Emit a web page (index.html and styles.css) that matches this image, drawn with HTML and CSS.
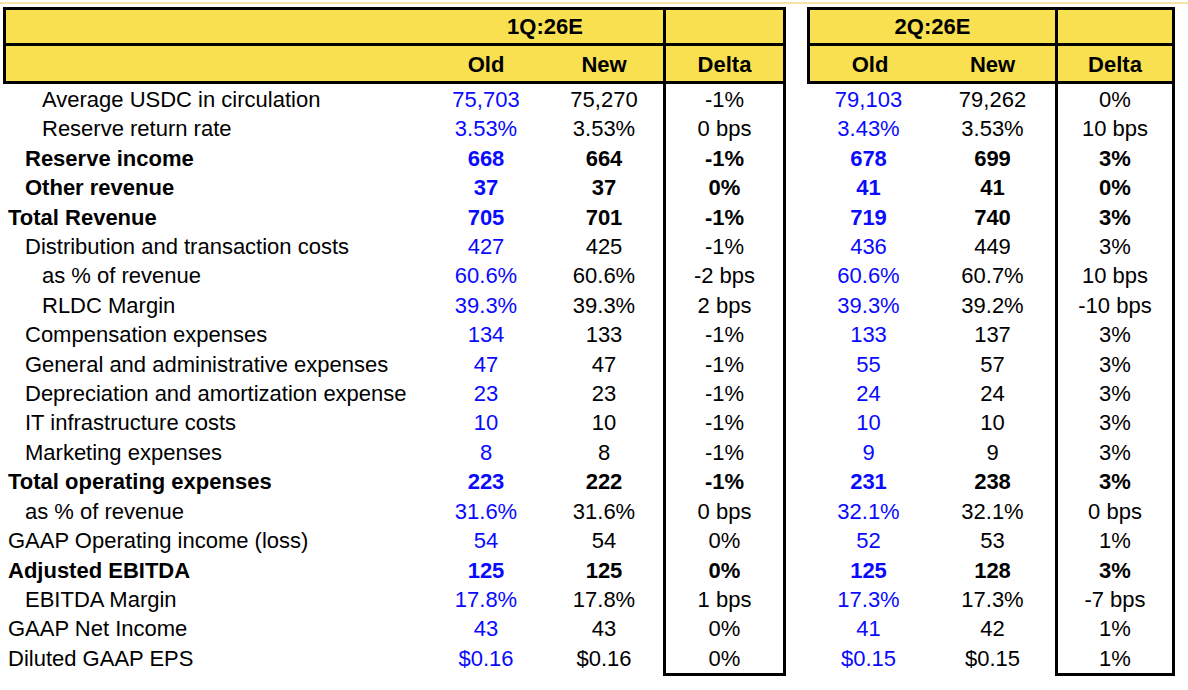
FILE: index.html
```html
<!DOCTYPE html>
<html>
<head>
<meta charset="utf-8">
<link rel="stylesheet" href="styles.css">
</head>
<body>
<div class="topline"></div>
<div class="sheet">
  <div class="row head1">
    <div class="h lab"></div>
    <div class="h span2">1Q:26E</div>
    <div class="h delta"></div>
    <div class="gap"></div>
    <div class="h span2 first">2Q:26E</div>
    <div class="h delta"></div>
  </div>
  <div class="row head2">
    <div class="h lab"></div>
    <div class="h">Old</div>
    <div class="h">New</div>
    <div class="h delta">Delta</div>
    <div class="gap"></div>
    <div class="h first">Old</div>
    <div class="h">New</div>
    <div class="h delta">Delta</div>
  </div>

  <div class="row data"><div class="lab i2">Average USDC in circulation</div><div class="old">75,703</div><div>75,270</div><div class="delta">-1%</div><div class="gap"></div><div class="old">79,103</div><div>79,262</div><div class="delta">0%</div></div>
  <div class="row data"><div class="lab i2">Reserve return rate</div><div class="old">3.53%</div><div>3.53%</div><div class="delta">0 bps</div><div class="gap"></div><div class="old">3.43%</div><div>3.53%</div><div class="delta">10 bps</div></div>
  <div class="row data bold"><div class="lab i1">Reserve income</div><div class="old">668</div><div>664</div><div class="delta">-1%</div><div class="gap"></div><div class="old">678</div><div>699</div><div class="delta">3%</div></div>
  <div class="row data bold"><div class="lab i1">Other revenue</div><div class="old">37</div><div>37</div><div class="delta">0%</div><div class="gap"></div><div class="old">41</div><div>41</div><div class="delta">0%</div></div>
  <div class="row data bold"><div class="lab">Total Revenue</div><div class="old">705</div><div>701</div><div class="delta">-1%</div><div class="gap"></div><div class="old">719</div><div>740</div><div class="delta">3%</div></div>
  <div class="row data"><div class="lab i1">Distribution and transaction costs</div><div class="old">427</div><div>425</div><div class="delta">-1%</div><div class="gap"></div><div class="old">436</div><div>449</div><div class="delta">3%</div></div>
  <div class="row data"><div class="lab i2">as % of revenue</div><div class="old">60.6%</div><div>60.6%</div><div class="delta">-2 bps</div><div class="gap"></div><div class="old">60.6%</div><div>60.7%</div><div class="delta">10 bps</div></div>
  <div class="row data"><div class="lab i2">RLDC Margin</div><div class="old">39.3%</div><div>39.3%</div><div class="delta">2 bps</div><div class="gap"></div><div class="old">39.3%</div><div>39.2%</div><div class="delta">-10 bps</div></div>
  <div class="row data"><div class="lab i1">Compensation expenses</div><div class="old">134</div><div>133</div><div class="delta">-1%</div><div class="gap"></div><div class="old">133</div><div>137</div><div class="delta">3%</div></div>
  <div class="row data"><div class="lab i1">General and administrative expenses</div><div class="old">47</div><div>47</div><div class="delta">-1%</div><div class="gap"></div><div class="old">55</div><div>57</div><div class="delta">3%</div></div>
  <div class="row data"><div class="lab i1">Depreciation and amortization expense</div><div class="old">23</div><div>23</div><div class="delta">-1%</div><div class="gap"></div><div class="old">24</div><div>24</div><div class="delta">3%</div></div>
  <div class="row data"><div class="lab i1">IT infrastructure costs</div><div class="old">10</div><div>10</div><div class="delta">-1%</div><div class="gap"></div><div class="old">10</div><div>10</div><div class="delta">3%</div></div>
  <div class="row data"><div class="lab i1">Marketing expenses</div><div class="old">8</div><div>8</div><div class="delta">-1%</div><div class="gap"></div><div class="old">9</div><div>9</div><div class="delta">3%</div></div>
  <div class="row data bold"><div class="lab">Total operating expenses</div><div class="old">223</div><div>222</div><div class="delta">-1%</div><div class="gap"></div><div class="old">231</div><div>238</div><div class="delta">3%</div></div>
  <div class="row data"><div class="lab i1">as % of revenue</div><div class="old">31.6%</div><div>31.6%</div><div class="delta">0 bps</div><div class="gap"></div><div class="old">32.1%</div><div>32.1%</div><div class="delta">0 bps</div></div>
  <div class="row data"><div class="lab">GAAP Operating income (loss)</div><div class="old">54</div><div>54</div><div class="delta">0%</div><div class="gap"></div><div class="old">52</div><div>53</div><div class="delta">1%</div></div>
  <div class="row data bold"><div class="lab">Adjusted EBITDA</div><div class="old">125</div><div>125</div><div class="delta">0%</div><div class="gap"></div><div class="old">125</div><div>128</div><div class="delta">3%</div></div>
  <div class="row data"><div class="lab i1">EBITDA Margin</div><div class="old">17.8%</div><div>17.8%</div><div class="delta">1 bps</div><div class="gap"></div><div class="old">17.3%</div><div>17.3%</div><div class="delta">-7 bps</div></div>
  <div class="row data"><div class="lab">GAAP Net Income</div><div class="old">43</div><div>43</div><div class="delta">0%</div><div class="gap"></div><div class="old">41</div><div>42</div><div class="delta">1%</div></div>
  <div class="row data last"><div class="lab">Diluted GAAP EPS</div><div class="old">$0.16</div><div>$0.16</div><div class="delta">0%</div><div class="gap"></div><div class="old">$0.15</div><div>$0.15</div><div class="delta">1%</div></div>
</div>
</body>
</html>
```

FILE: styles.css
```css
html, body {
  margin: 0;
  padding: 0;
  background: #ffffff;
}

body {
  font-family: "Liberation Sans", Arial, sans-serif;
  font-size: 22px;
  color: #000000;
}

.topline {
  margin-top: 2px;
  height: 2px;
  background: #f7e3a4;
}

.sheet {
  margin-top: 3px;
  margin-left: 3px;
  width: 1172px;
}

.row {
  display: grid;
  grid-template-columns: 424px 118px 118px 123px 21px 123px 125px 120px;
  height: 29.42px;
  line-height: 29.42px;
  text-align: center;
  white-space: nowrap;
}

.row > div {
  box-sizing: border-box;
}

.data > div {
  padding-top: 1px;
}

.row .lab {
  text-align: left;
  padding-left: 5px;
}

.row .lab.i1 {
  padding-left: 22px;
}

.row .lab.i2 {
  padding-left: 39px;
}

.row .old {
  color: #0a0aff;
}

.row .delta {
  border-left: 3px solid #000;
  border-right: 3px solid #000;
}

.row.last {
  height: auto;
}

.row.last .delta {
  border-bottom: 3px solid #000;
}

.bold {
  font-weight: bold;
}

.head1,
.head2 {
  font-weight: bold;
}

.head1 {
  height: 39px;
  line-height: 33px;
}

.head2 {
  height: 38px;
  line-height: 33px;
}

.h {
  background: #f9e050;
}

.head1 .h {
  border-top: 3px solid #000;
  border-bottom: 3px solid #000;
}

.head2 .h {
  border-bottom: 3px solid #000;
  padding-top: 2px;
}

.h.lab {
  border-left: 3px solid #000;
}

.span2 {
  grid-column: span 2;
}

.h.first {
  border-left: 3px solid #000;
}

.gap {
  background: transparent;
}
```
